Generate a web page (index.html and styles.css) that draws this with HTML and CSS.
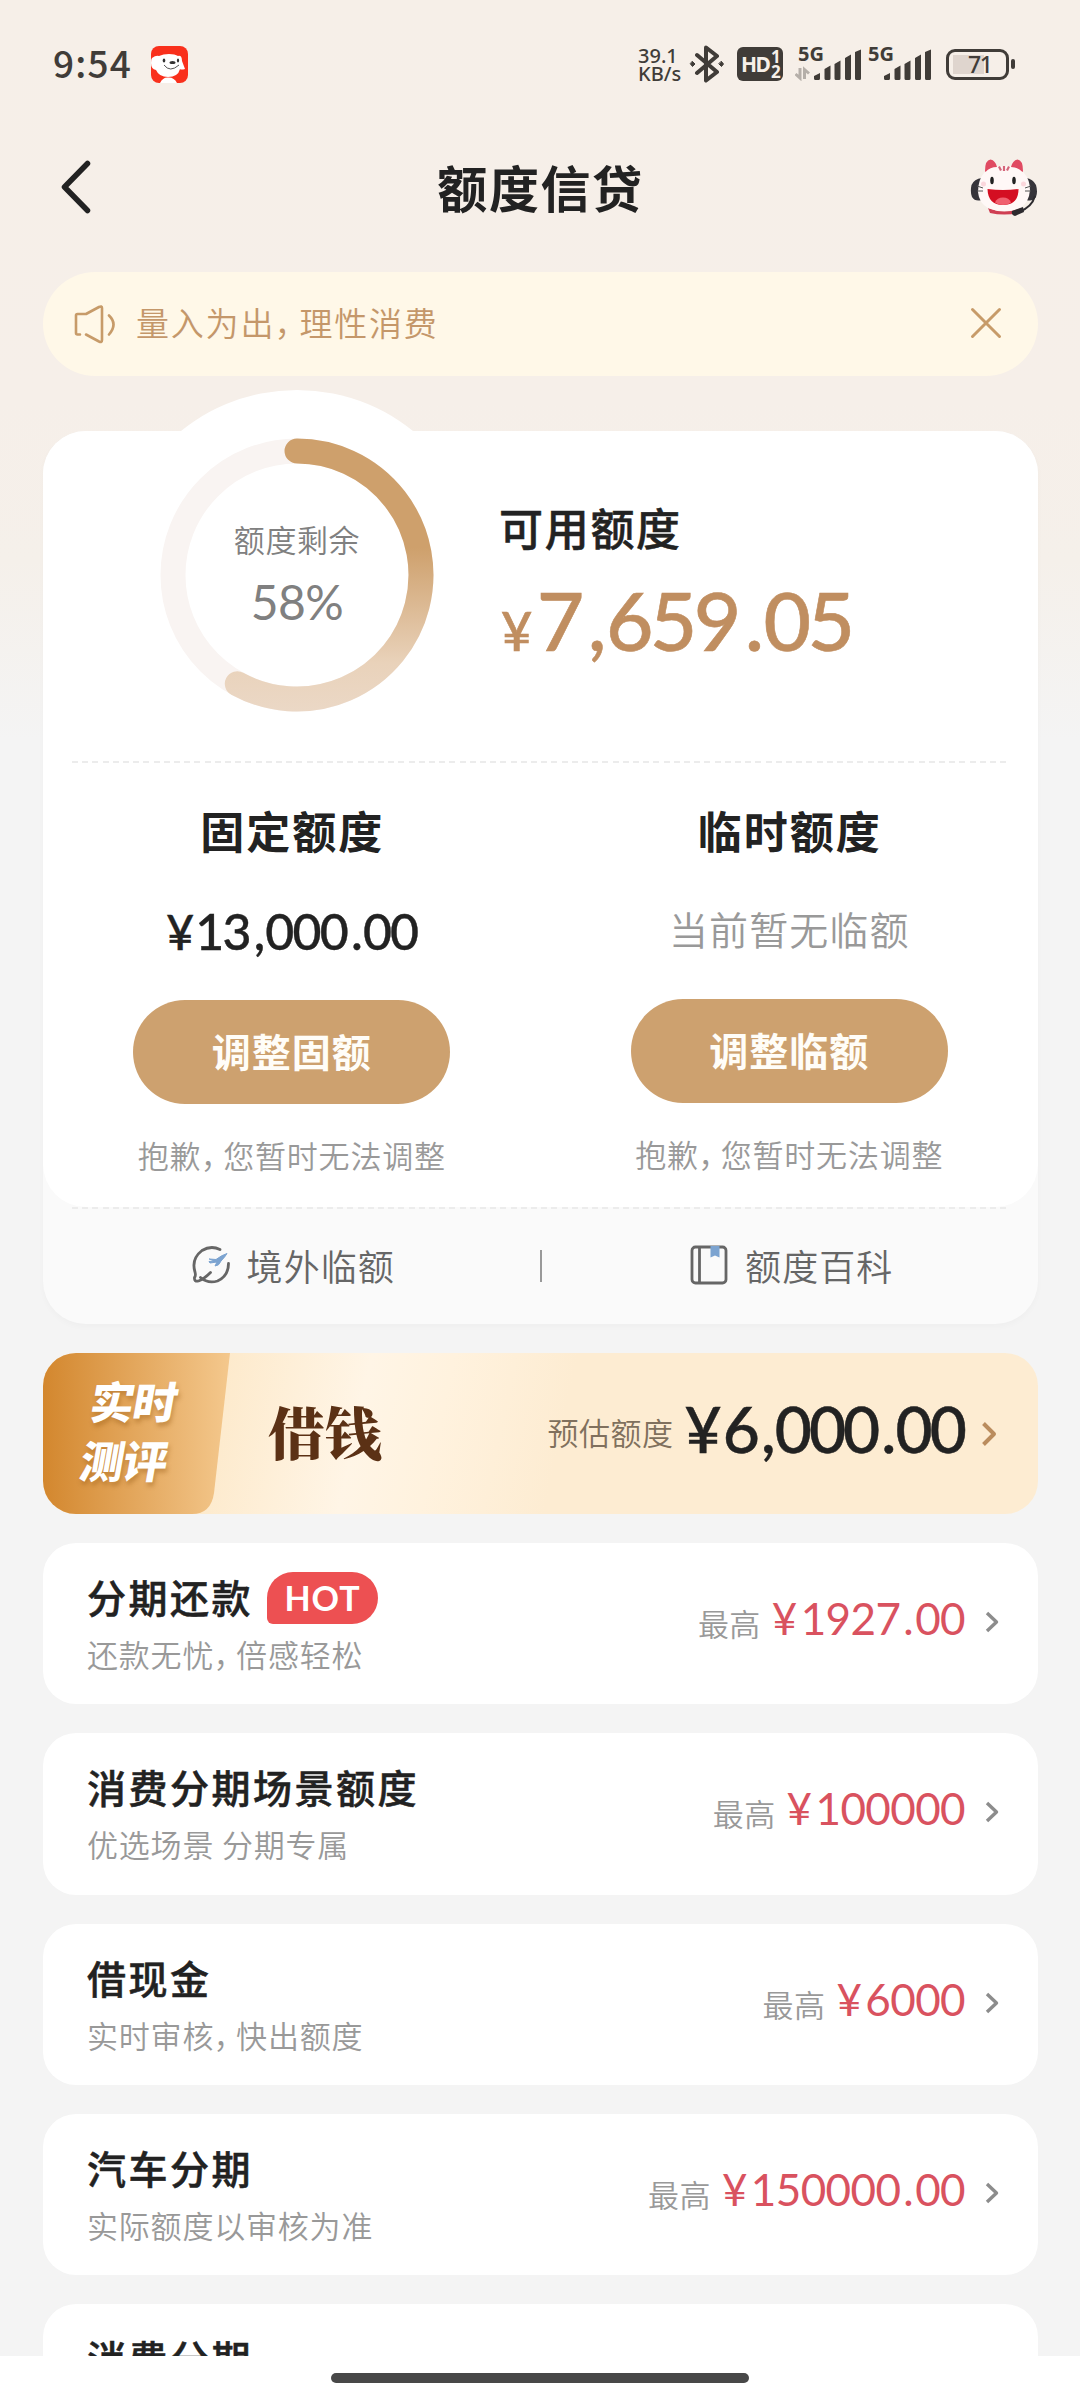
FILE: index.html
```html
<!DOCTYPE html>
<html lang="zh-CN">
<head>
<meta charset="utf-8">
<title>额度信贷</title>
<link rel="stylesheet" href="styles.css">
</head>
<body>
<div class="page">
  <header class="status">
    <span class="clock">9:54</span>
    <svg class="app-icon" width="37" height="37" viewBox="0 0 37 37">
      <rect width="37" height="37" rx="8" fill="#f9301c"/>
      <path d="M9 37Q12 31 17 31.500Q23 31 26 37Z" fill="#fff"/>
      <path d="M1 12Q5 9 8 10Q12 8 18 8Q24 8 27 10Q31 9 31 15L34 23Q30 24 29 23Q27 31 17 31Q8 31 5 24Q0 23 0 17Q0 13 1 12Z" fill="#fff"/>
      <ellipse cx="13" cy="14.500" rx="1.300" ry="2" fill="#333"/><ellipse cx="27" cy="14.500" rx="1.100" ry="2" fill="#333"/>
      <ellipse cx="21.500" cy="16.500" rx="3" ry="1.600" fill="#333"/>
      <path d="M13 19Q19 27 28 19" fill="none" stroke="#555" stroke-width="1"/>
    </svg>
    <div class="status-right">
      <div class="speed"><span>39.1</span><span>KB/s</span></div>
      <svg class="bt" width="36" height="38" viewBox="0 0 36 38" fill="none" stroke="#403c38" stroke-width="4" stroke-linejoin="round" stroke-linecap="round">
        <path d="M8 10L28 27L17 35.500V2.500L28 11L8 28"/>
        <path d="M3.500 16.500L6 19L3.500 21.500L1.500 19ZM32.500 16.500L34.500 19L32.500 21.500L30 19Z" fill="#403c38" stroke-width="1"/>
      </svg>
      <div class="hd"><b>HD</b><span class="hd-nums"><i>1</i><i>2</i></span></div>
      <div class="signal first">
        <span>5G</span>
        <svg width="67" height="34" viewBox="0 0 67 34" fill="#403c38">
          <path d="M5 21V31L.5 27M9.500 32V22.500L14 26.500" fill="none" stroke="#b5afa9" stroke-width="3"/>
          <path d="M19 29l6-3v5.500q0 1.500-1.500 1.500h-3Q19 33 19 31.500ZM29.500 22l6-3.500V31.500q0 1.500-1.500 1.500h-3q-1.500 0-1.500-1.500ZM39.500 17l6-3.500V31.500q0 1.500-1.500 1.500h-3q-1.500 0-1.500-1.500ZM50 11l6-3.500V31.500q0 1.500-1.500 1.500h-3q-1.500 0-1.500-1.500ZM60 5l6-2.500V31.500q0 1.500-1.500 1.500h-3q-1.500 0-1.500-1.500Z"/>
        </svg>
      </div>
      <div class="signal">
        <span>5G</span>
        <svg width="67" height="34" viewBox="0 0 67 34" fill="#403c38">
          <path d="M19 29l6-3v5.500q0 1.500-1.500 1.500h-3Q19 33 19 31.500ZM29.500 22l6-3.500V31.500q0 1.500-1.500 1.500h-3q-1.500 0-1.500-1.500ZM39.500 17l6-3.500V31.500q0 1.500-1.500 1.500h-3q-1.500 0-1.500-1.500ZM50 11l6-3.500V31.500q0 1.500-1.500 1.500h-3q-1.500 0-1.500-1.500ZM60 5l6-2.500V31.500q0 1.500-1.500 1.500h-3q-1.500 0-1.500-1.500Z"/>
        </svg>
      </div>
      <div class="battery"><span>71</span></div>
      <div class="nub"></div>
    </div>
  </header>

  <nav class="nav">
    <svg class="back" width="40" height="60" viewBox="0 0 40 60"><path d="M31.500 6.500L8.500 30L31.500 53.500" fill="none" stroke="#222" stroke-width="5.500" stroke-linecap="round" stroke-linejoin="round"/></svg>
    <h1>额度信贷</h1>
    <svg class="mascot" width="68" height="60" viewBox="0 0 68 60">
      <path d="M12 20Q4 21 1.500 27Q0 34 2 39Q5 44 12 42ZM56 20Q63 21 66 27Q68 34 66 39Q63 44 56 42Z" fill="#36343a"/>
      <path d="M65 38Q62 49 49 54" fill="none" stroke="#2c2a2e" stroke-width="2"/>
      <path d="M18 50Q34 57 51 50L49 55Q34 58 20 55Z" fill="#cf3f53"/>
      <path d="M14 15Q20 8 28 8H40Q48 8 54 15Q60 22 60 32Q59 45 50 50Q42 53 34 53Q25 53 18 50Q9 45 8 34Q8 22 14 15Z" fill="#fff8f7"/>
      <path d="M15 13Q15 2 20.500 1.500Q25.500 2.500 27 9Q20 9 15.500 14ZM53 13Q53 2 47.500 1.500Q42.500 2.500 41 9Q48 9 52.500 14Z" fill="#e04a62"/>
      <path d="M29 8.500l2 4M34 8v5M39 8.500l-2 4" stroke="#d4667a" stroke-width="2.200"/>
      <ellipse cx="22" cy="22.500" rx="1.800" ry="3.800" fill="#222"/><ellipse cx="44" cy="22.500" rx="1.800" ry="3.800" fill="#222"/>
      <circle cx="13.500" cy="26" r="2.500" fill="#fbd7dc"/><circle cx="53.500" cy="26" r="2.500" fill="#fbd7dc"/>
      <path d="M7 28l6 2M7 33h6M61 28l-6 2M61 33h-6" stroke="#555" stroke-width="1"/>
      <path d="M17.500 31Q33 33 48.500 31Q48.500 47 33 47Q18 47 17.500 31Z" fill="#d40e22"/>
      <path d="M25 44.500Q27 39.500 33 39.500Q39 39.500 41 44.500Q38 47 33 47Q28 47 25 44.500Z" fill="#f0606f"/>
      <path d="M42 53L53 49L54 54L45 58Q41 57 42 53Z" fill="#2c2a2e"/>
    </svg>
  </nav>

  <main class="content">
    <section class="notice">
      <svg width="42" height="42" viewBox="0 0 42 42" fill="none" stroke="#c79b69" stroke-width="2.600" stroke-linecap="round" stroke-linejoin="round">
        <path d="M6 31.500H3.500Q2 31.500 2 30V12.500Q2 11 3.500 11H12L25 4Q28 2.500 28 5V37Q28 40 25 38.500L12 31.500"/>
        <path d="M35 12.500Q44 21 35 31.500"/>
      </svg>
      <p>量入为出<span class="comma">，</span>理性消费</p>
      <svg class="close" width="32" height="32" viewBox="0 0 32 32"><path d="M2.500 2.500L29.500 29.500M29.500 2.500L2.500 29.500" stroke="#c79b69" stroke-width="3" stroke-linecap="round"/></svg>
    </section>

    <section class="quota">
      <div class="quota-main">
        <div class="summary">
          <div class="ring">
            <svg width="370" height="370" viewBox="0 0 370 370" fill="none">
              <defs><linearGradient id="arc" gradientUnits="userSpaceOnUse" x1="0" y1="48" x2="0" y2="322"><stop offset="0" stop-color="#cea06c"/><stop offset=".4" stop-color="#cea06c"/><stop offset=".82" stop-color="#e9d2ba"/><stop offset="1" stop-color="#ebd8c6"/></linearGradient></defs>
              <circle cx="185" cy="185" r="124" stroke="#f9f4f2" stroke-width="25"/>
              <path d="M185 61A124 124 0 1 1 125.300 293.700" stroke="url(#arc)" stroke-width="25" stroke-linecap="round"/>
            </svg>
            <div class="ring-text"><span class="ring-label">额度剩余</span><span class="ring-value num">58%</span></div>
          </div>
          <div class="available">
            <h2>可用额度</h2>
            <div class="amount num"><span class="yen">¥</span>7<span class="sep">,</span>659<span class="sep">.</span>05</div>
          </div>
        </div>
        <div class="dash"></div>
        <div class="columns">
          <div class="column">
            <h2>固定额度</h2>
            <div class="fixed num"><span class="yen">¥</span>13<span class="sep">,</span>000<span class="sep">.</span>00</div>
            <button>调整固额</button>
            <p class="note">抱歉<span class="comma">，</span>您暂时无法调整</p>
          </div>
          <div class="column">
            <h2>临时额度</h2>
            <div class="none">当前暂无临额</div>
            <button>调整临额</button>
            <p class="note">抱歉<span class="comma">，</span>您暂时无法调整</p>
          </div>
        </div>
      </div>
      <div class="dash"></div>
      <div class="links">
        <a class="link">
          <svg width="38" height="40" viewBox="0 0 38 40" fill="none" stroke="#666" stroke-width="2.800" stroke-linecap="round">
            <path d="M28 4.500Q19 0 10 5.500Q-1 14 3 27Q4 31 2.500 32.500Q2 37 6.500 36Q12 34 18.500 27.500"/><path d="M8.500 32.500Q16 39 25.500 36Q36.500 31 36.500 18.500"/>
            <path d="M17.500 14L24 14.500Q30 10 35 8.500Q33 12 29 16Q27 21 23 21L25 17L18 18L17 16.500L22 16Z" fill="#7ba3d0" stroke="#7ba3d0" stroke-width="1"/>
          </svg>
          <span>境外临额</span>
        </a>
        <i class="divider"></i>
        <a class="link">
          <svg width="38" height="40" viewBox="0 0 38 40" fill="none" stroke="#666" stroke-width="2.800">
            <rect x="2" y="2" width="34" height="36" rx="3.500"/><path d="M9.500 2V38"/><path d="M20.500 1H29.500V12.500L25 10.500L20.500 12.500Z" fill="#7ba3d0" stroke="none"/>
          </svg>
          <span>额度百科</span>
        </a>
      </div>
    </section>

    <section class="banner">
      <div class="tag"><span>实时</span><span>测评</span></div>
      <strong>借钱</strong>
      <span class="estimate">预估额度</span>
      <div class="banner-amount num"><span class="yen">¥</span>6<span class="sep">,</span>000<span class="sep">.</span>00</div>
      <svg class="go" width="16" height="26" viewBox="0 0 16 26"><path d="M2.500 2.500L13 13L2.500 23.500" fill="none" stroke="#ba8c5d" stroke-width="4" stroke-linejoin="round"/></svg>
    </section>

    <section class="row">
      <div class="row-text"><h3>分期还款<em>HOT</em></h3><p>还款无忧<span class="comma">，</span>倍感轻松</p></div>
      <span class="max">最高</span><span class="price num"><span class="yen">¥</span>1927<span class="sep">.</span>00</span>
      <svg class="chev" width="14" height="22" viewBox="0 0 14 22"><path d="M2 2L11.500 11L2 20" fill="none" stroke="#8c8c8c" stroke-width="3.400" stroke-linejoin="round"/></svg>
    </section>
    <section class="row">
      <div class="row-text"><h3>消费分期场景额度</h3><p>优选场景 分期专属</p></div>
      <span class="max">最高</span><span class="price num"><span class="yen">¥</span>100000</span>
      <svg class="chev" width="14" height="22" viewBox="0 0 14 22"><path d="M2 2L11.500 11L2 20" fill="none" stroke="#8c8c8c" stroke-width="3.400" stroke-linejoin="round"/></svg>
    </section>
    <section class="row">
      <div class="row-text"><h3>借现金</h3><p>实时审核<span class="comma">，</span>快出额度</p></div>
      <span class="max">最高</span><span class="price num"><span class="yen">¥</span>6000</span>
      <svg class="chev" width="14" height="22" viewBox="0 0 14 22"><path d="M2 2L11.500 11L2 20" fill="none" stroke="#8c8c8c" stroke-width="3.400" stroke-linejoin="round"/></svg>
    </section>
    <section class="row">
      <div class="row-text"><h3>汽车分期</h3><p>实际额度以审核为准</p></div>
      <span class="max">最高</span><span class="price num"><span class="yen">¥</span>150000<span class="sep">.</span>00</span>
      <svg class="chev" width="14" height="22" viewBox="0 0 14 22"><path d="M2 2L11.500 11L2 20" fill="none" stroke="#8c8c8c" stroke-width="3.400" stroke-linejoin="round"/></svg>
    </section>
    <section class="row">
      <div class="row-text"><h3>消费分期</h3></div>
    </section>
  </main>
  <footer class="home"><i></i></footer>
</div>
</body>
</html>
```
FILE: styles.css
```css
* { box-sizing: border-box; margin: 0; padding: 0; }
body { font-family: "Noto Sans CJK SC", sans-serif; color: #222; }
svg { display: block; flex: none; }
h1, h2, h3 { white-space: nowrap; }
i, em { font-style: normal; }

.page {
  width: 1080px; height: 2400px; overflow: hidden;
  display: flex; flex-direction: column;
  background: linear-gradient(#f6efe8 0, #f6efe9 400px, #f5f0ea 560px, #f4f4f4 740px);
}
.num { font-family: Lato, sans-serif; white-space: nowrap; }
.comma { font-feature-settings: "halt"; margin: 0 .2em 0 -.02em; }

/* status bar */
.status { height: 128px; flex: none; display: flex; align-items: center; padding: 0 65px 0 53px; color: #403c38; }
.clock { font: 500 37px/50px "Noto Sans CJK SC", sans-serif; width: 98px; letter-spacing: 1.200px; margin-top: -5px; }
.status-right { margin-left: auto; display: flex; align-items: center; }
.speed { width: 51px; display: flex; flex-direction: column; font: 500 20px/18px "Noto Sans", sans-serif; margin-top: 2px; }
.bt { margin-top: -1px; }
.hd { width: 46px; height: 34px; margin-left: 12px; border-radius: 6px; background: #403c38; color: #f6efe8; display: flex; align-items: center; padding-left: 4px; }
.hd b { font: 700 21px/34px "Noto Sans", sans-serif; letter-spacing: -1.5px; width: 30px; }
.hd-nums { display: flex; flex-direction: column; font: 700 17px/15px "Noto Sans", sans-serif; }
.hd-nums i { height: 15px; }
.signal { width: 67px; height: 34px; margin-left: 3px; position: relative; }
.signal.first { margin-left: 12px; }
.signal span { position: absolute; left: 3px; top: -2px; font: 700 20px/18px "Noto Sans", sans-serif; }
.battery { width: 63px; height: 31px; margin-left: 14px; border: 3px solid #403c38; border-radius: 9px; padding: 0 0 0 19px; font: 500 23px/25px "Noto Sans", sans-serif; letter-spacing: -1.5px; background: linear-gradient(#dfd5ce, #dfd5ce) 4px 3px / 31px 19px no-repeat; }
.nub { width: 4px; height: 10px; margin-left: 2px; border-radius: 2px; background: #403c38; }

/* title bar */
.nav { height: 120px; flex: none; display: flex; align-items: center; justify-content: space-between; padding: 0 42px 0 56px; }
.nav h1 { font-size: 50px; line-height: 60px; font-weight: 700; letter-spacing: 1.600px; margin: -5px 0 0 15px; }
.back { margin-top: -2px; }

.content { flex: 1; min-height: 0; overflow: hidden; padding: 24px 42px 0 43px; display: flex; flex-direction: column; }
.content > * { flex: none; }

.notice { height: 104px; border-radius: 52px; background: #fff8e8; display: flex; align-items: center; padding: 0 36px 0 31px; color: #c4976a; }
.notice p { flex: 1; margin: -4px 0 0 20px; font-size: 33px; line-height: 50px; letter-spacing: 1.800px; font-weight: 350; }
.close { margin-top: -3px; }

.quota { height: 893px; margin-top: 55px; border-radius: 43px; background: #fafafa; box-shadow: 0 3px 6px rgba(0,0,0,.025); }
.quota-main { height: 776px; border-radius: 43px; background: #fff; }
.summary { height: 330px; display: flex; }
.ring { width: 370px; height: 370px; margin: -41px 0 0 69px; border-radius: 50%; background: #fff; display: grid; }
.ring > * { grid-area: 1 / 1; }
.ring-text { display: flex; flex-direction: column; align-items: center; padding-top: 129px; color: #808080; }
.ring-label { font-size: 31px; line-height: 40px; font-weight: 350; letter-spacing: .6px; }
.ring-value { font-size: 48px; line-height: 50px; margin-top: 18px; letter-spacing: -.6px; }
.available { margin-left: 17px; padding-top: 71px; }
h2 { font-size: 44px; line-height: 50px; font-weight: 500; letter-spacing: 1.700px; -webkit-text-stroke: .5px; }
.amount { margin: 22px 0 0 2px; font-size: 82px; line-height: 90px; font-weight: 500; color: #c08e60; letter-spacing: -3.600px; -webkit-text-stroke: .6px; }
.amount .yen { font-size: 54px; margin-right: 8px; }
.amount .sep { margin: 0 3px 0 7px; }
.dash { height: 2px; margin: 0 28px 0 29px; background: repeating-linear-gradient(90deg, #ececec 0 6px, transparent 6px 10.200px); }
.columns { display: grid; grid-template-columns: 1fr 1fr; padding-top: 42px; }
.column { display: flex; flex-direction: column; align-items: center; }
.columns h2 { font-weight: 700; -webkit-text-stroke: 0; letter-spacing: 2px; padding-left: 1px; }
.fixed { margin-top: 51px; font-size: 50px; line-height: 50px; font-weight: 500; letter-spacing: -1.800px; -webkit-text-stroke: .4px; }
.fixed .sep { margin: 0 2px 0 4px; }
.fixed .yen { margin-right: 3px; font-size: 48px; }
.none { margin-top: 48px; font-size: 39px; line-height: 50px; font-weight: 350; color: #999; letter-spacing: 1.100px; padding-bottom: 3px; }
button { margin-top: 43px; width: 317px; height: 104px; border: 0; border-radius: 52px; background: #cda16f; color: #fffdf8; font: 700 39px/100px "Noto Sans CJK SC", sans-serif; letter-spacing: 1px; padding-bottom: 4px; }
.note { margin-top: 31px; font-size: 31px; line-height: 40px; font-weight: 350; color: #999; letter-spacing: .8px; white-space: nowrap; }
.links { height: 115px; display: grid; grid-template-columns: 1fr 2px 1fr; align-items: center; }
.link { display: flex; align-items: center; justify-content: center; gap: 17px; padding-left: 4px; font-size: 36px; line-height: 50px; font-weight: 350; color: #666; letter-spacing: 1.100px; }
.link svg { margin-top: -3px; }
.link span { margin-top: -4px; }
.divider { height: 32px; margin-top: -2px; background: #999; }

.banner { height: 161px; margin-top: 29px; border-radius: 33px; overflow: hidden; display: flex; align-items: center; padding-right: 41px; background: linear-gradient(102deg, #fdeacc 18%, #fff5e6 32%, #fff2de 40%, #fdecd2 52%); }
.tag { width: 187px; height: 161px; padding: 18px 0 0 48px; display: flex; flex-direction: column; background: linear-gradient(90deg, #d3872e, #f4c88d); clip-path: path("M0 0H187L171 140Q168 161 149 161H0Z"); color: #fff; font-size: 44px; line-height: 59px; font-weight: 900; text-shadow: 2px 4px 4px rgba(150,90,20,.4); }
.tag span { transform: skewX(-10deg); letter-spacing: -1px; }
.tag span + span { margin-left: -10px; }
.banner strong { margin: -7px 0 0 38px; font: 900 57px/70px "Noto Serif CJK SC", "Noto Sans CJK SC", serif; color: #5b3115; }
.estimate { margin: -3px 11px 0 auto; font-size: 31px; line-height: 40px; font-weight: 350; color: #80705d; letter-spacing: .5px; }
.banner-amount { font-size: 64px; line-height: 70px; font-weight: 500; letter-spacing: -2.900px; margin-top: -9px; -webkit-text-stroke: .5px; }
.banner-amount .sep { margin: 0 2px 0 4px; }
.banner-amount .yen { margin-right: 4px; }
.go { margin-left: 17px; }

.row { height: 161.300px; margin-top: 29px; border-radius: 33px; background: #fff; display: flex; padding: 0 39px 0 44px; }
.row-text { flex: 1; padding-top: 23px; }
h3 { display: flex; align-items: center; height: 60px; font-size: 39px; font-weight: 500; letter-spacing: 2.500px; -webkit-text-stroke: .5px; }
h3 em { height: 52px; width: 111px; margin: 3px 0 0 14px; border-radius: 26px 26px 26px 6px; background: #ed5052; color: #fff; text-align: center; font: 700 34px/52px Lato, sans-serif; letter-spacing: 1px; -webkit-text-stroke: 0; }
.row-text p { margin-top: 5px; font-size: 31px; line-height: 46px; font-weight: 350; color: #999; letter-spacing: .8px; }
.max { margin: 60px 11px 0 0; font-size: 31px; line-height: 40px; font-weight: 350; color: #999; letter-spacing: .4px; }
.price { margin-top: 50px; font-size: 44px; line-height: 50px; color: #d9525f; letter-spacing: -.6px; }
.price .sep { margin: 0 2px 0 3px; }
.price .yen { margin-right: 4px; }
.chev { margin: 68px 0 0 20px; }

.home { height: 44px; flex: none; background: #fff; display: flex; justify-content: center; padding-top: 17px; }
.home i { width: 418px; height: 10px; border-radius: 5px; background: #484848; }
```
